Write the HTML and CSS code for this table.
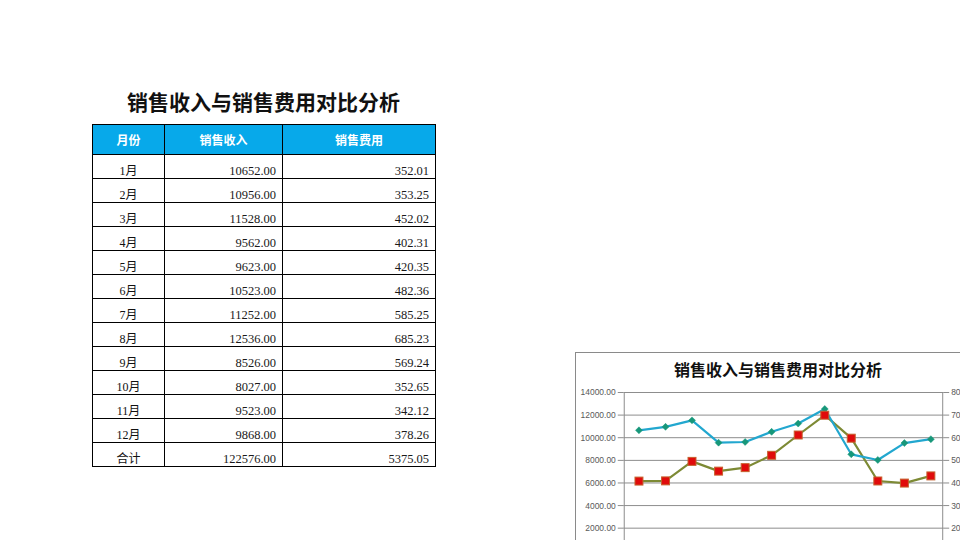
FILE: index.html
```html
<!DOCTYPE html>
<html lang="zh-CN">
<head>
<meta charset="utf-8">
<title>销售收入与销售费用对比分析</title>
<link rel="stylesheet" href="styles.css">
</head>
<body>
<div class="sheet">
  <section class="report">
    <h1 class="report-title">销售收入与销售费用对比分析</h1>
    <table class="data">
      <colgroup><col class="c-month"><col class="c-rev"><col class="c-exp"></colgroup>
      <thead>
        <tr><th>月份</th><th>销售收入</th><th>销售费用</th></tr>
      </thead>
      <tbody>
        <tr><td class="m">1月</td><td class="n">10652.00</td><td class="n">352.01</td></tr>
        <tr><td class="m">2月</td><td class="n">10956.00</td><td class="n">353.25</td></tr>
        <tr><td class="m">3月</td><td class="n">11528.00</td><td class="n">452.02</td></tr>
        <tr><td class="m">4月</td><td class="n">9562.00</td><td class="n">402.31</td></tr>
        <tr><td class="m">5月</td><td class="n">9623.00</td><td class="n">420.35</td></tr>
        <tr><td class="m">6月</td><td class="n">10523.00</td><td class="n">482.36</td></tr>
        <tr><td class="m">7月</td><td class="n">11252.00</td><td class="n">585.25</td></tr>
        <tr><td class="m">8月</td><td class="n">12536.00</td><td class="n">685.23</td></tr>
        <tr><td class="m">9月</td><td class="n">8526.00</td><td class="n">569.24</td></tr>
        <tr><td class="m">10月</td><td class="n">8027.00</td><td class="n">352.65</td></tr>
        <tr><td class="m">11月</td><td class="n">9523.00</td><td class="n">342.12</td></tr>
        <tr><td class="m">12月</td><td class="n">9868.00</td><td class="n">378.26</td></tr>
        <tr><td class="m">合计</td><td class="n">122576.00</td><td class="n">5375.05</td></tr>
      </tbody>
    </table>
  </section>

  <section class="chart">
    <div class="chart-title">销售收入与销售费用对比分析</div>
    <svg class="chart-svg" width="406" height="210" viewBox="0 0 406 210">
      <g class="grid">
        <line x1="48" y1="40.7" x2="369" y2="40.7"/>
        <line x1="48" y1="63.4" x2="369" y2="63.4"/>
        <line x1="48" y1="86.1" x2="369" y2="86.1"/>
        <line x1="48" y1="108.9" x2="369" y2="108.9"/>
        <line x1="48" y1="131.6" x2="369" y2="131.6"/>
        <line x1="48" y1="154.3" x2="369" y2="154.3"/>
        <line x1="48" y1="177.0" x2="369" y2="177.0"/>
        <line x1="48" y1="199.7" x2="369" y2="199.7"/>
      </g>
      <g class="axis">
        <line x1="48.5" y1="40.7" x2="48.5" y2="200"/>
        <line x1="368.5" y1="40.7" x2="368.5" y2="200"/>
        <line x1="42" y1="40.7" x2="48" y2="40.7"/>
        <line x1="42" y1="63.4" x2="48" y2="63.4"/>
        <line x1="42" y1="86.1" x2="48" y2="86.1"/>
        <line x1="42" y1="108.9" x2="48" y2="108.9"/>
        <line x1="42" y1="131.6" x2="48" y2="131.6"/>
        <line x1="42" y1="154.3" x2="48" y2="154.3"/>
        <line x1="42" y1="177.0" x2="48" y2="177.0"/>
        <line x1="369" y1="40.7" x2="375" y2="40.7"/>
        <line x1="369" y1="63.4" x2="375" y2="63.4"/>
        <line x1="369" y1="86.1" x2="375" y2="86.1"/>
        <line x1="369" y1="108.9" x2="375" y2="108.9"/>
        <line x1="369" y1="131.6" x2="375" y2="131.6"/>
        <line x1="369" y1="154.3" x2="375" y2="154.3"/>
        <line x1="369" y1="177.0" x2="375" y2="177.0"/>
      </g>
      <g class="ylab-left">
        <text x="40" y="43.7">14000.00</text>
        <text x="40" y="66.4">12000.00</text>
        <text x="40" y="89.1">10000.00</text>
        <text x="40" y="111.9">8000.00</text>
        <text x="40" y="134.6">6000.00</text>
        <text x="40" y="157.3">4000.00</text>
        <text x="40" y="180.0">2000.00</text>
      </g>
      <g class="ylab-right">
        <text x="377" y="43.7">800.00</text>
        <text x="377" y="66.4">700.00</text>
        <text x="377" y="89.1">600.00</text>
        <text x="377" y="111.9">500.00</text>
        <text x="377" y="134.6">400.00</text>
        <text x="377" y="157.3">300.00</text>
        <text x="377" y="180.0">200.00</text>
        <text x="377" y="202.7">100.00</text>
      </g>
      <polyline class="line-exp" points="63.3,129.7 90,129.5 116.6,109.9 143.3,119.7 170,116.2 196.6,103.8 223.3,83.4 250,63.5 276.6,86.6 303.3,129.6 330,131.7 356.6,124.5"/>
      <polyline class="line-rev" points="63.3,78.7 90,75.2 116.6,68.7 143.3,91.1 170,90.4 196.6,80.2 223.3,71.9 250,57.3 276.6,102.8 303.3,108.5 330,91.5 356.6,87.6"/>
      <g class="mk-rev">
        <polygon points="63.3,75.2 66.8,78.7 63.3,82.2 59.8,78.7"/>
        <polygon points="90,71.7 93.5,75.2 90,78.7 86.5,75.2"/>
        <polygon points="116.6,65.2 120.1,68.7 116.6,72.2 113.1,68.7"/>
        <polygon points="143.3,87.6 146.8,91.1 143.3,94.6 139.8,91.1"/>
        <polygon points="170,86.9 173.5,90.4 170,93.9 166.5,90.4"/>
        <polygon points="196.6,76.7 200.1,80.2 196.6,83.7 193.1,80.2"/>
        <polygon points="223.3,68.4 226.8,71.9 223.3,75.4 219.8,71.9"/>
        <polygon points="250,53.8 253.5,57.3 250,60.8 246.5,57.3"/>
        <polygon points="276.6,99.3 280.1,102.8 276.6,106.3 273.1,102.8"/>
        <polygon points="303.3,105 306.8,108.5 303.3,112 299.8,108.5"/>
        <polygon points="330,88 333.5,91.5 330,95 326.5,91.5"/>
        <polygon points="356.6,84.1 360.1,87.6 356.6,91.1 353.1,87.6"/>
      </g>
      <g class="mk-exp">
        <rect x="59.3" y="125.7" width="8" height="8"/>
        <rect x="86" y="125.5" width="8" height="8"/>
        <rect x="112.6" y="105.9" width="8" height="8"/>
        <rect x="139.3" y="115.7" width="8" height="8"/>
        <rect x="166" y="112.2" width="8" height="8"/>
        <rect x="192.6" y="99.8" width="8" height="8"/>
        <rect x="219.3" y="79.4" width="8" height="8"/>
        <rect x="246" y="59.5" width="8" height="8"/>
        <rect x="272.6" y="82.6" width="8" height="8"/>
        <rect x="299.3" y="125.6" width="8" height="8"/>
        <rect x="326" y="127.7" width="8" height="8"/>
        <rect x="352.6" y="120.5" width="8" height="8"/>
      </g>
    </svg>
  </section>
</div>
</body>
</html>
```
FILE: styles.css
```css
html, body {
  margin: 0;
  padding: 0;
  background: #ffffff;
  overflow: hidden;
  width: 960px;
  height: 540px;
}

.sheet {
  display: flex;
  align-items: flex-start;
}

.report {
  margin-left: 92px;
  padding-top: 87px;
  width: 343px;
  flex: none;
}

.report-title {
  margin: 0 0 9px 0;
  font-family: "Noto Sans CJK SC", "Liberation Sans", sans-serif;
  font-weight: 700;
  font-size: 21px;
  line-height: 28px;
  text-align: center;
  color: #111111;
  letter-spacing: 0;
}

.data {
  border-collapse: collapse;
  table-layout: fixed;
  width: 343px;
  font-family: "Liberation Serif", "Noto Sans CJK SC", serif;
  color: #111111;
}

.c-month { width: 72px; }
.c-rev { width: 118px; }
.c-exp { width: 153px; }

.data th {
  background: #07a9ea;
  color: #ffffff;
  font-family: "Noto Sans CJK SC", "Liberation Sans", sans-serif;
  font-weight: 700;
  font-size: 12px;
  height: 29px;
  padding: 0;
  border: 1px solid #000000;
  text-align: center;
  vertical-align: middle;
}

.data td {
  border: 1px solid #000000;
  height: 24px;
  padding: 0 6px 0 6px;
  vertical-align: bottom;
  font-size: 12.5px;
  line-height: 14px;
  box-sizing: border-box;
}

.data td.m {
  text-align: center;
  font-family: "Liberation Serif", "Noto Sans CJK SC", serif;
  font-size: 12px;
}

.data td.n {
  text-align: right;
  color: #1a1a1a;
}

.chart {
  margin-left: 140px;
  margin-top: 352px;
  width: 406px;
  height: 210px;
  flex: none;
  border: 1px solid #8a8a8a;
  box-sizing: border-box;
  display: flex;
  flex-direction: column;
  position: relative;
}

.chart-title {
  position: absolute;
  left: 0;
  right: 0;
  top: 5px;
  text-align: center;
  font-family: "Noto Sans CJK SC", "Liberation Sans", sans-serif;
  font-weight: 700;
  font-size: 16px;
  line-height: 22px;
  color: #111111;
}

.chart-svg {
  display: block;
  margin: -1px 0 0 -1px;
}

.grid line {
  stroke: #8c8c8c;
  stroke-width: 1;
}

.axis line {
  stroke: #8c8c8c;
  stroke-width: 1;
}

.ylab-left text,
.ylab-right text {
  font-family: "Liberation Sans", "DejaVu Sans", sans-serif;
  font-size: 8.5px;
  fill: #595959;
}

.ylab-left text { text-anchor: end; }
.ylab-right text { text-anchor: start; }

.line-rev {
  fill: none;
  stroke: #22a7cf;
  stroke-width: 2.2;
  stroke-linejoin: round;
}

.line-exp {
  fill: none;
  stroke: #7d8a35;
  stroke-width: 2.2;
  stroke-linejoin: round;
}

.mk-rev polygon {
  fill: #17977a;
  stroke: #17977a;
  stroke-width: 0.5;
}

.mk-exp rect {
  fill: #e00b0b;
  stroke: #c6612d;
  stroke-width: 1;
}
```
